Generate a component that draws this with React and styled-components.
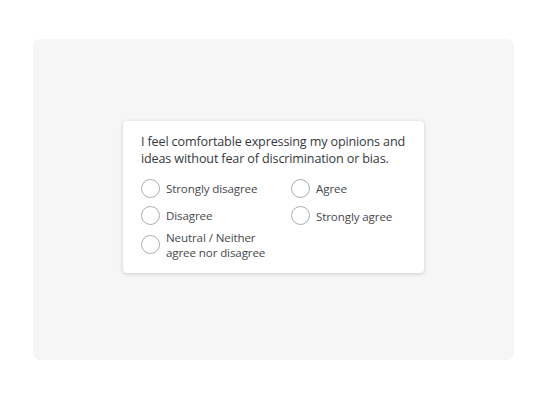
import React from "react"
import styled, { createGlobalStyle } from "styled-components"

const GlobalStyle = createGlobalStyle`
  html, body {
    margin: 0;
    padding: 0;
    background: #ffffff;
  }
  body {
    font-family: "Open Sans", "Liberation Sans", sans-serif;
  }
`

const Page = styled.div`
  width: 547px;
  height: 400px;
  padding: 39px 33px 40px;
  box-sizing: border-box;
`

const Panel = styled.div`
  width: 481px;
  height: 321px;
  background: #f6f6f6;
  border-radius: 7px;
  display: flex;
  align-items: center;
  justify-content: center;
  padding-bottom: 6px;
  box-sizing: border-box;
`

const Card = styled.div`
  width: 301px;
  box-sizing: border-box;
  background: #ffffff;
  border-radius: 4px;
  box-shadow: 0 1px 4px rgba(0, 0, 0, 0.16), 0 0 1px rgba(0, 0, 0, 0.08);
  padding: 12px 14px 13px 18px;
`

const Question = styled.p`
  margin: 0 0 12px;
  font-size: 12.6px;
  line-height: 17px;
  letter-spacing: -0.15px;
  color: #36393c;
`

const Options = styled.div`
  display: grid;
  grid-template-columns: 150px 1fr;
  grid-auto-flow: column;
  grid-template-rows: repeat(3, auto);
  row-gap: 8px;
`

const Option = styled.label`
  display: flex;
  align-items: center;
  gap: 6px;
  min-height: 19px;
  font-size: 11.6px;
  line-height: 15px;
  letter-spacing: -0.12px;
  color: #46494d;
  margin-top: ${(p) => p.$offset || 0}px;
`

const Label = styled.span`
  padding-top: ${(p) => p.$drop || 0}px;
`

const Radio = styled.span`
  flex: none;
  width: 17px;
  height: 17px;
  border: 1px solid #a9adb1;
  border-radius: 50%;
  background: #ffffff;
`

const options = [
  { label: "Strongly disagree" },
  { label: "Disagree" },
  { label: ["Neutral / Neither", "agree nor disagree"], offset: -3 },
  { label: "Agree" },
  { label: "Strongly agree", drop: 3 },
]

export default function App() {
  return (
    <>
      <GlobalStyle />
      <Page>
        <Panel>
          <Card>
            <Question>
              I feel comfortable expressing my opinions and ideas without fear
              of discrimination or bias.
            </Question>
            <Options>
              {options.map((o, i) => (
                <Option key={i} $offset={o.offset}>
                  <Radio />
                  <Label $drop={o.drop}>
                    {Array.isArray(o.label)
                      ? o.label.map((l, j) => (
                          <React.Fragment key={j}>
                            {l}
                            {j === 0 && <br />}
                          </React.Fragment>
                        ))
                      : o.label}
                  </Label>
                </Option>
              ))}
            </Options>
          </Card>
        </Panel>
      </Page>
    </>
  )
}
